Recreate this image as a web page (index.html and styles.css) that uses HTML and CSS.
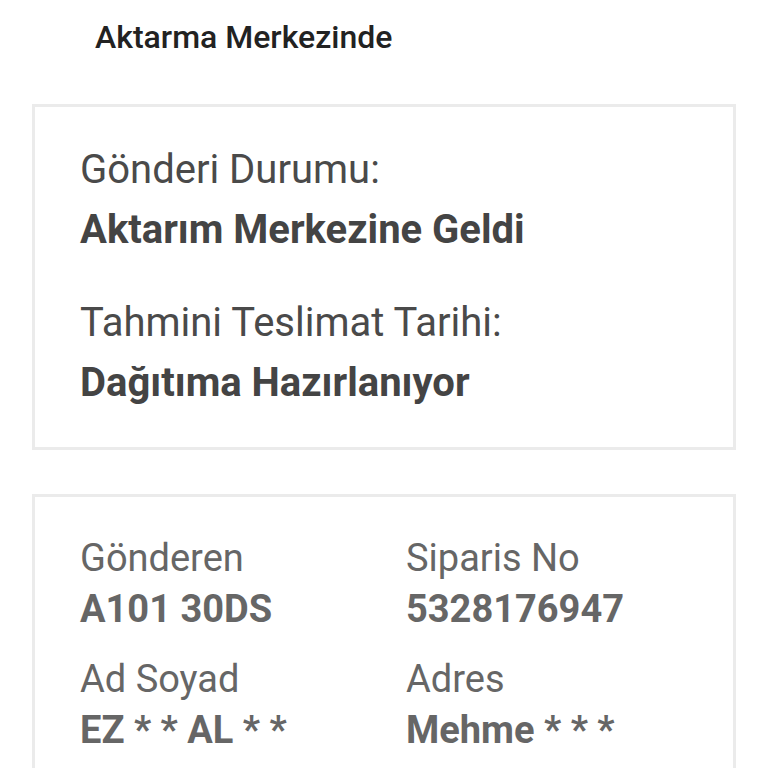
FILE: index.html
```html
<!DOCTYPE html>
<html lang="tr">
<head>
<meta charset="utf-8">
<link rel="stylesheet" href="styles.css">
</head>
<body>
<div class="page">
  <h1 class="title">Aktarma Merkezinde</h1>
  <section class="card status">
    <div class="label">Gönderi Durumu:</div>
    <div class="value">Aktarım Merkezine Geldi</div>
    <div class="label second">Tahmini Teslimat Tarihi:</div>
    <div class="value">Dağıtıma Hazırlanıyor</div>
  </section>
  <section class="card details">
    <div class="field">
      <div class="label">Gönderen</div>
      <div class="value">A101 30DS</div>
    </div>
    <div class="field">
      <div class="label">Siparis No</div>
      <div class="value">5328176947</div>
    </div>
    <div class="field">
      <div class="label">Ad Soyad</div>
      <div class="value">EZ * * AL * *</div>
    </div>
    <div class="field">
      <div class="label">Adres</div>
      <div class="value">Mehme * * *</div>
    </div>
  </section>
</div>
</body>
</html>
```
FILE: styles.css
```css
* { box-sizing: border-box; }
html, body { margin: 0; padding: 0; background: #fff; }
body { font-family: Roboto, "Noto Sans", sans-serif; overflow: hidden; height: 768px; }
.page { padding: 0 32px; }
.title {
  margin: 0;
  padding: 17px 0 0 63px;
  font-size: 32px;
  font-weight: 500;
  line-height: 40px;
  color: #222;
  height: 104px;
}
.card {
  border: 3px solid #ebebeb;
  background: #fff;
}
.status {
  padding: 33px 45px 34px;
  height: 346px;
}
.status .label {
  font-size: 40px;
  line-height: 60px;
  color: #4a4a4a;
}
.status .value {
  font-size: 40px;
  font-weight: 700;
  line-height: 60px;
  color: #444;
}
.status .second { margin-top: 33px; }
.details {
  margin-top: 44px;
  padding: 36px 45px 40px;
  display: grid;
  grid-template-columns: 326px 1fr;
  row-gap: 19px;
}
.details .label {
  font-size: 38px;
  line-height: 51px;
  color: #666;
}
.details .value {
  font-size: 38px;
  font-weight: 700;
  line-height: 51px;
  color: #666;
}
```
